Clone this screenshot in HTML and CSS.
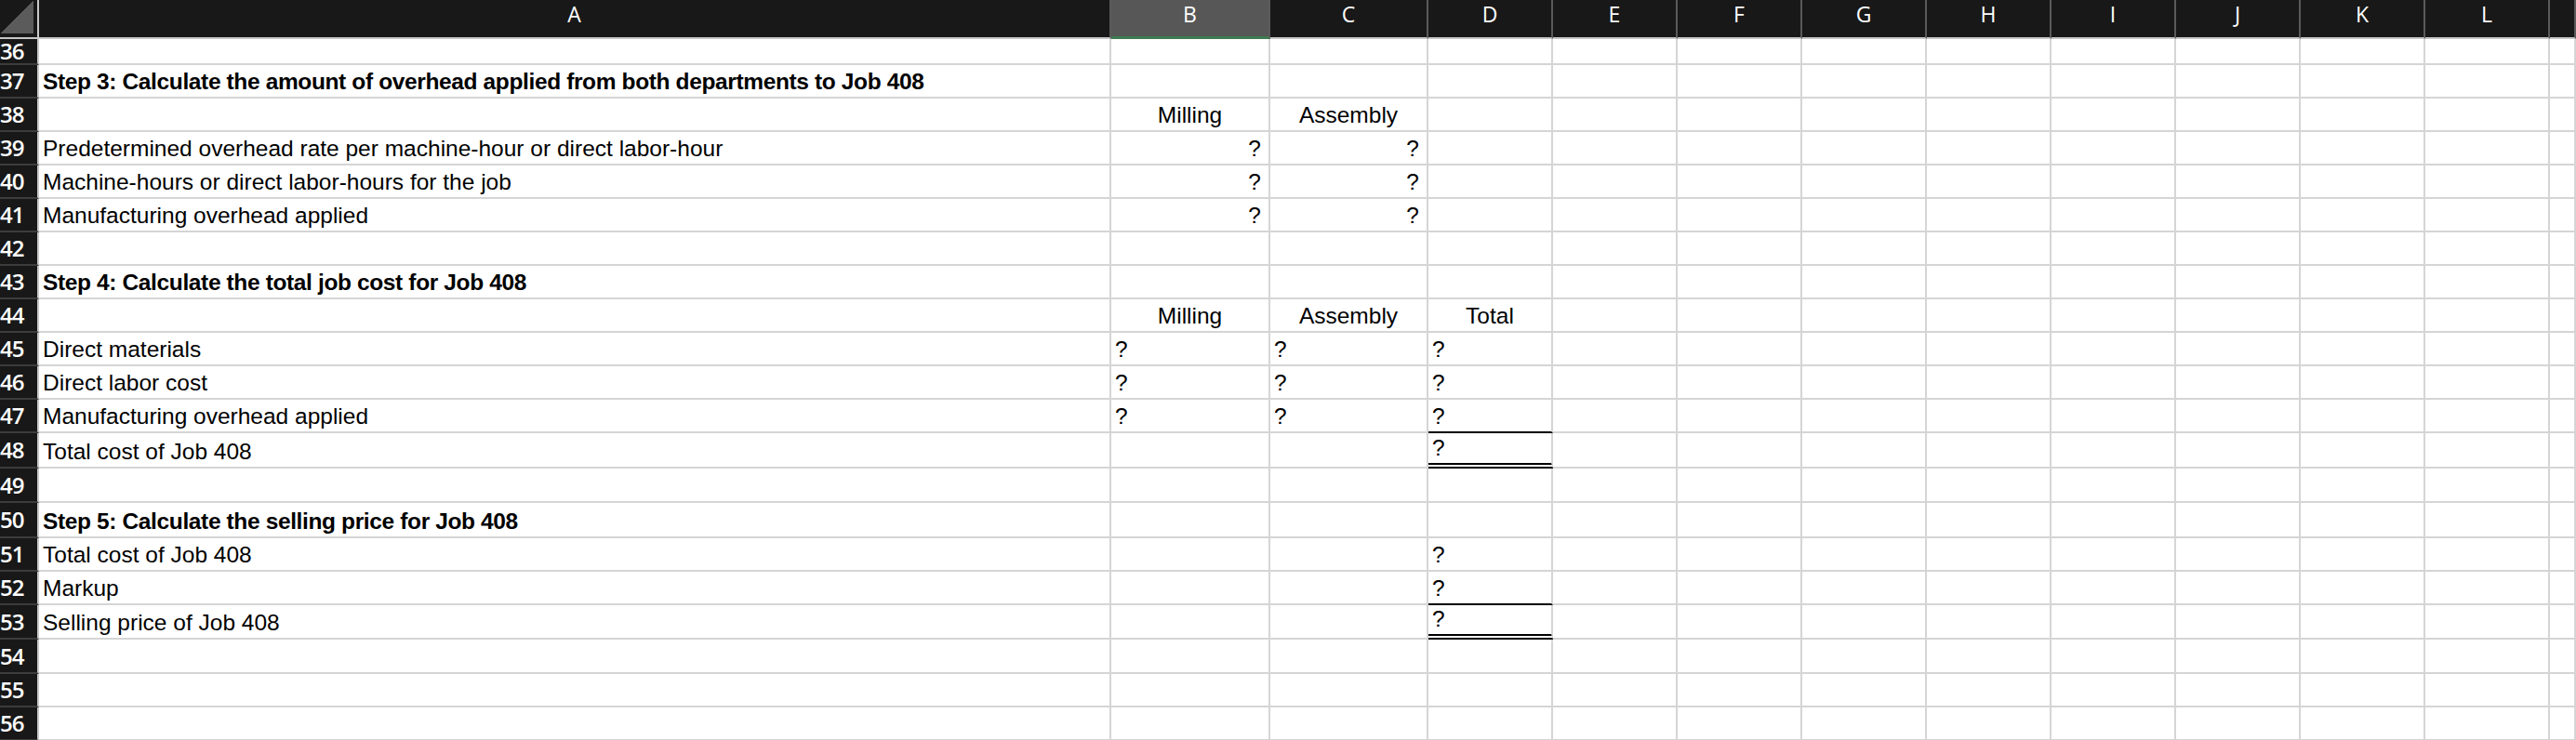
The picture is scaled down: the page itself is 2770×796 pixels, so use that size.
FILE: index.html
```html
<!DOCTYPE html>
<html>
<head>
<meta charset="utf-8">
<link rel="stylesheet" href="styles.css">
</head>
<body>
<div class="sheet">
  <div class="r hdr">
    <div class="corner"></div><div>A</div><div class="sel">B</div><div>C</div><div>D</div><div>E</div><div>F</div><div>G</div><div>H</div><div>I</div><div>J</div><div>K</div><div>L</div><div></div>
  </div>
  <div class="r h28"><div class="rh">36</div><div></div><div></div><div></div><div></div><div></div><div></div><div></div><div></div><div></div><div></div><div></div><div></div><div></div></div>
  <div class="r"><div class="rh">37</div><div class="b">Step 3: Calculate the amount of overhead applied from both departments to Job 408</div><div></div><div></div><div></div><div></div><div></div><div></div><div></div><div></div><div></div><div></div><div></div><div></div></div>
  <div class="r"><div class="rh">38</div><div></div><div class="ctr">Milling</div><div class="ctr">Assembly</div><div></div><div></div><div></div><div></div><div></div><div></div><div></div><div></div><div></div><div></div></div>
  <div class="r"><div class="rh">39</div><div>Predetermined overhead rate per machine-hour or direct labor-hour</div><div class="rt">?</div><div class="rt">?</div><div></div><div></div><div></div><div></div><div></div><div></div><div></div><div></div><div></div><div></div></div>
  <div class="r"><div class="rh">40</div><div>Machine-hours or direct labor-hours for the job</div><div class="rt">?</div><div class="rt">?</div><div></div><div></div><div></div><div></div><div></div><div></div><div></div><div></div><div></div><div></div></div>
  <div class="r"><div class="rh">41</div><div>Manufacturing overhead applied</div><div class="rt">?</div><div class="rt">?</div><div></div><div></div><div></div><div></div><div></div><div></div><div></div><div></div><div></div><div></div></div>
  <div class="r"><div class="rh">42</div><div></div><div></div><div></div><div></div><div></div><div></div><div></div><div></div><div></div><div></div><div></div><div></div><div></div></div>
  <div class="r"><div class="rh">43</div><div class="b">Step 4: Calculate the total job cost for Job 408</div><div></div><div></div><div></div><div></div><div></div><div></div><div></div><div></div><div></div><div></div><div></div><div></div></div>
  <div class="r"><div class="rh">44</div><div></div><div class="ctr">Milling</div><div class="ctr">Assembly</div><div class="ctr">Total</div><div></div><div></div><div></div><div></div><div></div><div></div><div></div><div></div><div></div></div>
  <div class="r"><div class="rh">45</div><div>Direct materials</div><div>?</div><div>?</div><div>?</div><div></div><div></div><div></div><div></div><div></div><div></div><div></div><div></div><div></div></div>
  <div class="r"><div class="rh">46</div><div>Direct labor cost</div><div>?</div><div>?</div><div>?</div><div></div><div></div><div></div><div></div><div></div><div></div><div></div><div></div><div></div></div>
  <div class="r"><div class="rh">47</div><div>Manufacturing overhead applied</div><div>?</div><div>?</div><div class="ul">?</div><div></div><div></div><div></div><div></div><div></div><div></div><div></div><div></div><div></div></div>
  <div class="r h38"><div class="rh">48</div><div>Total cost of Job 408</div><div></div><div></div><div class="dbl">?</div><div></div><div></div><div></div><div></div><div></div><div></div><div></div><div></div><div></div></div>
  <div class="r h37"><div class="rh">49</div><div></div><div></div><div></div><div></div><div></div><div></div><div></div><div></div><div></div><div></div><div></div><div></div><div></div></div>
  <div class="r h38"><div class="rh">50</div><div class="b">Step 5: Calculate the selling price for Job 408</div><div></div><div></div><div></div><div></div><div></div><div></div><div></div><div></div><div></div><div></div><div></div><div></div></div>
  <div class="r"><div class="rh">51</div><div>Total cost of Job 408</div><div></div><div></div><div>?</div><div></div><div></div><div></div><div></div><div></div><div></div><div></div><div></div><div></div></div>
  <div class="r"><div class="rh">52</div><div>Markup</div><div></div><div></div><div class="ul">?</div><div></div><div></div><div></div><div></div><div></div><div></div><div></div><div></div><div></div></div>
  <div class="r h37"><div class="rh">53</div><div>Selling price of Job 408</div><div></div><div></div><div class="dbl">?</div><div></div><div></div><div></div><div></div><div></div><div></div><div></div><div></div><div></div></div>
  <div class="r h37"><div class="rh">54</div><div></div><div></div><div></div><div></div><div></div><div></div><div></div><div></div><div></div><div></div><div></div><div></div><div></div></div>
  <div class="r"><div class="rh">55</div><div></div><div></div><div></div><div></div><div></div><div></div><div></div><div></div><div></div><div></div><div></div><div></div><div></div></div>
  <div class="r"><div class="rh">56</div><div></div><div></div><div></div><div></div><div></div><div></div><div></div><div></div><div></div><div></div><div></div><div></div><div></div></div>
</div>
</body>
</html>
```
FILE: styles.css
```css
* {
  box-sizing: border-box;
}
html, body {
  margin: 0;
  padding: 0;
  background: #ffffff;
}
body {
  width: 2770px;
  height: 796px;
  overflow: hidden;
  font-family: "Liberation Sans", Arial, sans-serif;
  color: #000;
}
.sheet {
  display: flex;
  flex-direction: column;
}
.r {
  display: grid;
  grid-template-columns: 42px 1153px 171px 170px 134px repeat(8, 134px) 1fr;
  height: 36px;
  flex: none;
}
.r.h28 { height: 28px; }
.r.h37 { height: 37px; }
.r.h38 { height: 38px; }

.r > div {
  border-right: 2px solid #d5d5d5;
  border-bottom: 2px solid #d5d5d5;
  display: flex;
  align-items: flex-end;
  padding: 0 4px 2px 4px;
  font-size: 24.5px;
  line-height: 1.15;
  white-space: nowrap;
  overflow: hidden;
}
.r > .b {
  font-weight: bold;
  letter-spacing: -0.37px;
}
.r > .ctr { justify-content: center; }
.r > .rt { justify-content: flex-end; padding-right: 8px; }
.r > .ul { border-bottom: 2px solid #000; }
.r > .dbl { border-bottom: 6px double #000; }

.r > .rh {
  background: #181818;
  color: #ffffff;
  font-family: "Open Sans", "DejaVu Sans", sans-serif;
  font-size: 24px;
  font-weight: 600;
  line-height: 1;
  align-items: center;
  padding: 0;
  border-right: 2px solid #c9c9c9;
  border-bottom: 2px solid #3c3c3c;
  letter-spacing: -1px;
  overflow: visible;
}

.hdr {
  height: 42px;
}
.hdr > div {
  background: #181818;
  color: #ffffff;
  font-family: "Open Sans", "DejaVu Sans", sans-serif;
  font-size: 23px;
  font-weight: 500;
  justify-content: center;
  align-items: flex-start;
  padding: 0;
  line-height: 30px;
  border-right: 2px solid #5a5a5a;
  border-bottom: 2px solid #c6c6c6;
}
.hdr > .corner {
  border-right: 2px solid #c9c9c9;
  background-color: #181818;
  background-image: linear-gradient(to bottom right, transparent 50%, #5b5b5b 50%);
  background-size: 36px 36px;
  background-repeat: no-repeat;
  background-position: 0 0;
}
.hdr > .sel {
  background: #575757;
  border-bottom: 3px solid #3e7a50;
}
```
